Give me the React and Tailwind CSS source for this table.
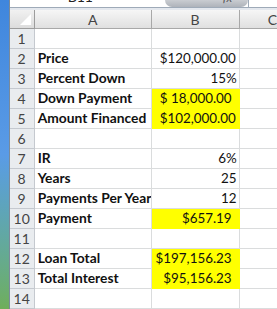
const rows = [
    { n: 1 },
    { n: 2, label: "Price", money: "120,000.00", sign: "$" },
    { n: 3, label: "Percent Down", plain: "15%" },
    { n: 4, label: "Down Payment", money: "18,000.00", sign: "$", hl: true },
    { n: 5, label: "Amount Financed", money: "102,000.00", sign: "$", hl: true },
    { n: 6 },
    { n: 7, label: "IR", plain: "6%" },
    { n: 8, label: "Years", plain: "25" },
    { n: 9, label: "Payments Per Year", plain: "12" },
    { n: 10, label: "Payment", cur: "$657.19", hl: true },
    { n: 11 },
    { n: 12, label: "Loan Total", cur: "$197,156.23", hl: true },
    { n: 13, label: "Total Interest", cur: "$95,156.23", hl: true },
    { n: 14 },
];

const App = () => {
    return (
        <div className="w-[277px] h-[309px] flex overflow-hidden bg-white" style={{ fontFamily: "Lato, 'Open Sans', sans-serif" }}>
            {/* desktop edge */}
            <div className="w-[10px] h-full bg-gradient-to-b from-[#3f86dd] via-[#5a9be6] to-[#6fae5a] border-r border-[#7a8a9a]" />

            <div className="flex-1 flex flex-col">
                {/* formula bar */}
                <div className="h-[9px] flex border-b border-[#9eaab8] bg-white">
                    <div className="w-[155px] relative overflow-hidden">
                        <span className="absolute left-[58px] top-[-10px] text-[14px] leading-[14px] text-[#222]">B11</span>
                    </div>
                    <div className="w-[83px] h-[7px] rounded-b-[10px] bg-gradient-to-b from-[#c9ccd1] to-[#aeb3ba] relative overflow-hidden">
                        <span className="absolute left-[58px] top-[-8px] text-[12px] leading-[12px] italic text-[#555]">fx</span>
                    </div>
                    <div className="flex-1 border-l border-[#9eaab8]" />
                </div>
                <div className="h-[3px] bg-[#e4e8ee]" />

                {/* grid */}
                <div className="grid grid-cols-[25px_117px_88px_1fr] grid-rows-[19px] auto-rows-[20px] text-[13.4px]">
                    <div className="bg-gradient-to-b from-[#f1f1f1] to-[#dcdcdc] border-r border-b border-[#9c9c9c] flex items-end justify-end p-[3px]">
                        <div className="w-0 h-0 border-l-[11px] border-l-transparent border-b-[11px] border-b-white" />
                    </div>
                    <div className="bg-gradient-to-b from-[#f6f6f6] to-[#e0e0e0] border-r border-b border-[#a8a8a8] flex items-center justify-center text-[#444] text-[14px]">A</div>
                    <div className="bg-gradient-to-b from-[#f6f6f6] to-[#e0e0e0] border-r border-b border-[#a8a8a8] flex items-center justify-center text-[#444] text-[14px]">B</div>
                    <div className="bg-gradient-to-b from-[#f6f6f6] to-[#e0e0e0] border-b border-[#a8a8a8] flex items-center pl-[28px] text-[#444] text-[14px]">C</div>

                    {rows.map((r) => (
                        <div key={r.n} className="contents">
                            <div className="bg-[#e9ecef] border-r border-b border-[#c5c9cf] flex items-center justify-center text-[#444] text-[14px]">
                                {r.n}
                            </div>
                            <div className="border-r border-b border-[#dadcdd] flex items-center pl-[3px] font-bold text-[13.8px] text-[#111] whitespace-nowrap overflow-hidden">
                                {r.label}
                            </div>
                            <div className={`border-r border-b flex items-center text-[#111] ${r.hl ? "bg-[#ffff00] border-[#ffff00]" : "border-[#dadcdd]"}`}>
                                {r.money && (
                                    <div className="flex w-full pl-[8px] pr-[7px] justify-between">
                                        <span>{r.sign}</span>
                                        <span>{r.money}</span>
                                    </div>
                                )}
                                {r.plain && <div className="w-full text-right pr-[2px]">{r.plain}</div>}
                                {r.cur && <div className="w-full text-right pr-[7px]">{r.cur}</div>}
                            </div>
                            <div className="border-b border-[#dadcdd]" />
                        </div>
                    ))}
                </div>
            </div>
        </div>
    );
};

export default App;
